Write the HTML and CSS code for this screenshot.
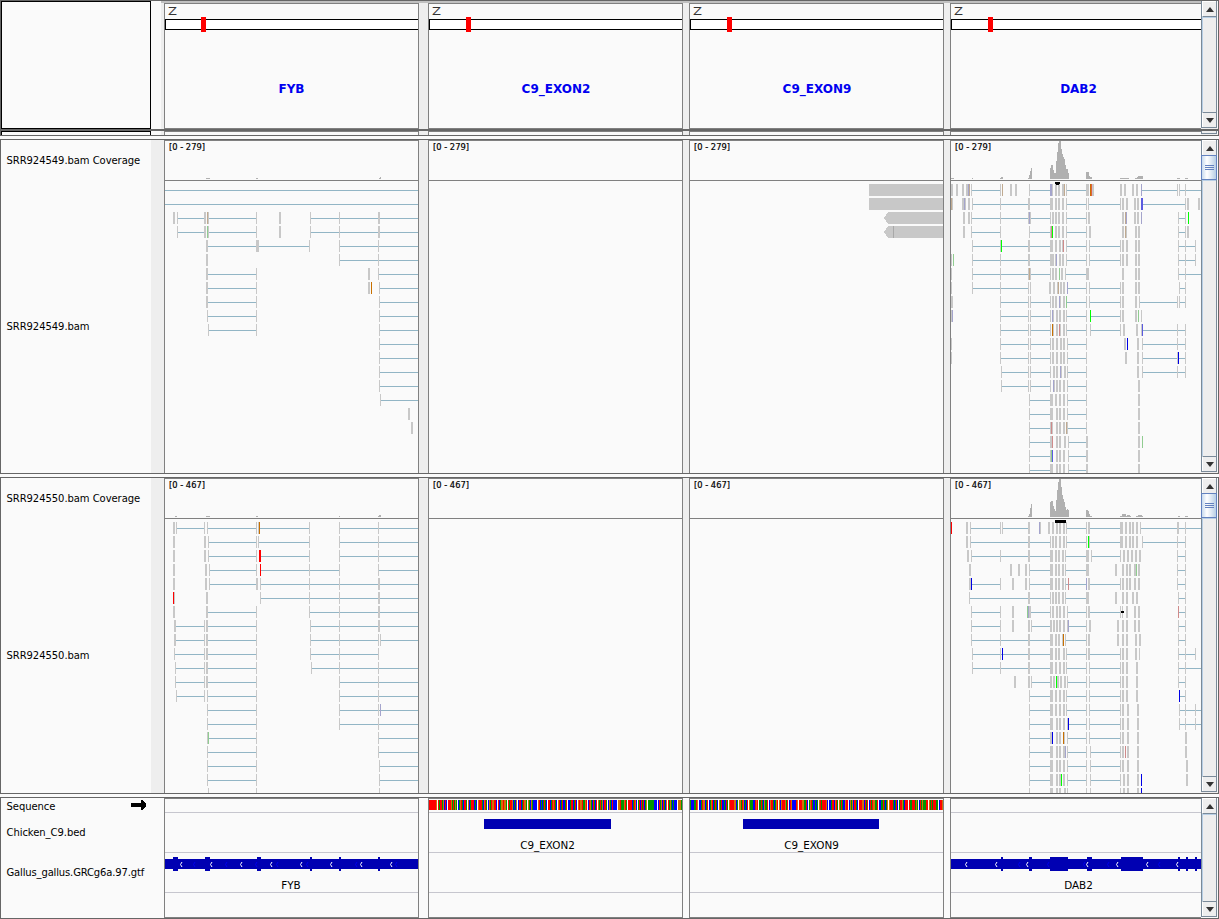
FILE: index.html
```html
<!DOCTYPE html>
<html lang="en">
<head>
<meta charset="utf-8">
<title>Genome viewer</title>
<link rel="stylesheet" href="styles.css">
</head>
<body>
<main class="app">
  <section class="row header-row">
    <div class="name-box"></div>
    <div class="gap gap-header"></div>
    <div class="topline"></div>
    <div class="frame f1"><svg data-view="header" data-x="165" data-y="4" data-w="253" data-h="124" data-mark="201" data-cx="291.5" data-label="FYB"></svg></div>
    <div class="frame f2"><svg data-view="header" data-x="429" data-y="4" data-w="253" data-h="124" data-mark="466" data-cx="556" data-label="C9_EXON2"></svg></div>
    <div class="frame f3"><svg data-view="header" data-x="690" data-y="4" data-w="253" data-h="124" data-mark="727" data-cx="817" data-label="C9_EXON9"></svg></div>
    <div class="frame f4"><svg data-view="header" data-x="951" data-y="4" data-w="250" data-h="124" data-mark="988" data-cx="1078.5" data-label="DAB2"></svg></div>
    <div class="scroll"><b class="up"></b><i></i><b class="down"></b></div>
  </section>
  <section class="row strip-row">
    <div class="name-box"></div>
    <div class="gap gap-header"></div>
    <div class="frame f1"></div><div class="frame f2"></div><div class="frame f3"></div><div class="frame f4"></div>
    <div class="scroll"></div>
  </section>
  <section class="row data-row row-549">
    <div class="names"><span class="cov">SRR924549.bam Coverage</span><span class="reads">SRR924549.bam</span></div>
    <div class="gap"></div>
    <div class="frame f1"><svg data-view="reads" data-set="fyb549" data-x="165" data-y="141" data-w="253" data-h="332" data-origin="160" data-range="[0 - 279]"></svg></div>
    <div class="frame f2"><svg data-view="reads" data-x="429" data-y="141" data-w="253" data-h="332" data-range="[0 - 279]"></svg></div>
    <div class="frame f3"><svg data-view="reads" data-set="exon9" data-x="690" data-y="141" data-w="253" data-h="332" data-range="[0 - 279]"></svg></div>
    <div class="frame f4"><svg data-view="reads" data-set="dab549" data-x="951" data-y="141" data-w="250" data-h="332" data-origin="945" data-range="[0 - 279]"></svg></div>
    <div class="scroll"><b class="up"></b><em></em><i></i><b class="down"></b></div>
  </section>
  <section class="row data-row row-550">
    <div class="names"><span class="cov">SRR924550.bam Coverage</span><span class="reads">SRR924550.bam</span></div>
    <div class="gap"></div>
    <div class="frame f1"><svg data-view="reads" data-set="fyb550" data-x="165" data-y="479" data-w="253" data-h="314" data-origin="160" data-range="[0 - 467]"></svg></div>
    <div class="frame f2"><svg data-view="reads" data-x="429" data-y="479" data-w="253" data-h="314" data-range="[0 - 467]"></svg></div>
    <div class="frame f3"><svg data-view="reads" data-x="690" data-y="479" data-w="253" data-h="314" data-range="[0 - 467]"></svg></div>
    <div class="frame f4"><svg data-view="reads" data-set="dab550" data-x="951" data-y="479" data-w="250" data-h="314" data-origin="945" data-range="[0 - 467]"></svg></div>
    <div class="scroll"><b class="up"></b><em></em><i></i><b class="down"></b></div>
  </section>
  <section class="row gene-row">
    <div class="names">
      <span class="seq">Sequence<svg class="arrow" width="15" height="10" viewBox="0 0 15 10" shape-rendering="crispEdges"><path d="M0 3h10V0h1l4 4v2l-4 4h-1V7H0z"/></svg></span>
      <span class="bed">Chicken_C9.bed</span>
      <span class="gtf">Gallus_gallus.GRCg6a.97.gtf</span>
    </div>
    <div class="frame f1"><svg data-view="genes" data-set="fyb" data-x="165" data-y="799" data-w="253" data-h="118"></svg></div>
    <div class="frame f2"><svg data-view="genes" data-set="exon2" data-x="429" data-y="799" data-w="253" data-h="118"></svg></div>
    <div class="frame f3"><svg data-view="genes" data-set="exon9" data-x="690" data-y="799" data-w="253" data-h="118"></svg></div>
    <div class="frame f4"><svg data-view="genes" data-set="dab2" data-x="951" data-y="799" data-w="250" data-h="118"></svg></div>
    <div class="scroll"><b class="up"></b><i></i><b class="down"></b></div>
  </section>
</main>
<script src="tracks.js"></script>
</body>
</html>
```

FILE: styles.css
```css
* { box-sizing: border-box; }
body { margin: 0; background: #fafafa; font-family: "DejaVu Sans", sans-serif; }
.app { width: 1219px; height: 919px; display: flex; flex-direction: column; overflow: hidden; }
.row {
  display: grid;
  grid-template-columns: 150px 10px 3px 255px 9px 255px 6px 255px 6px 251px 16px 1px;
  grid-template-rows: minmax(0, 1fr);
  border: 1px solid #666;
  background: #eee;
  flex: none;
}
.header-row { height: 130px; grid-template-rows: 2px minmax(0, 1fr); }
.strip-row { height: 6px; margin-bottom: 3px; }
.row-549 { height: 335px; margin-bottom: 3px; }
.row-550 { height: 317px; margin-bottom: 3px; }
.gene-row { height: 122px; background: #fafafa; }

.name-box { grid-column: 1; grid-row: 1 / -1; border: 1px solid #000; background: #fafafa; }
.strip-row .name-box { border-bottom: 0; }
.gap { grid-column: 2; grid-row: 1 / -1; }
.gap-header { background: #fafafa; }
.topline { grid-column: 3 / 11; grid-row: 1; background: #c0c0c0; }
.frame { grid-row: -2 / -1; border: 1px solid #808080; background: #fafafa; overflow: hidden; }
.f1 { grid-column: 4; }
.f2 { grid-column: 6; }
.f3 { grid-column: 8; }
.f4 { grid-column: 10; border-right: 0; }
.strip-row .frame, .data-row .frame { border-bottom: 0; }
.frame svg { display: block; }

.names {
  grid-column: 1;
  display: flex;
  flex-direction: column;
  background: #fafafa;
  font-size: 10px;
  letter-spacing: -0.06px;
  line-height: 14px;
  color: #000;
  white-space: nowrap;
}
.names span { display: flex; align-items: center; padding-left: 5.5px; }
.cov { height: 41px; }
.reads { flex: 1; }
.seq { height: 17px; }
.bed { height: 36px; }
.gtf { height: 43px; }
.gtf { letter-spacing: -0.15px; }
.names .seq { justify-content: space-between; padding-right: 5px; }
.arrow { margin-bottom: 3px; }

.scroll {
  grid-column: 11;
  grid-row: 1 / -1;
  display: flex;
  flex-direction: column;
  margin-bottom: 1px;
  background: #eee;
  border: 1px solid #7a8a99;
  border-top: 0;
  box-shadow: 1px 0 0 #fafafa;
}
.scroll b { height: 16px; flex: none; display: flex; align-items: center; justify-content: center; border-left: 1px solid #fff; border-top: 1px solid #fff; }
.scroll b::before { content: ""; border: 4.5px solid transparent; }
.scroll .up { border-bottom: 1px solid #7a8a99; }
.scroll .up::before { border-top: 0; border-bottom: 5px solid #333; }
.scroll .down { height: 15px; border-top: 1px solid #7a8a99; }
.scroll .down::before { border-bottom: 0; border-top: 5px solid #333; }
.scroll i { flex: 1; border-left: 1px solid #b8cfe5; border-top: 1px solid #b8cfe5; }
.scroll em {
  height: 25px;
  flex: none;
  margin: -1px -1px 0;
  border: 1px solid #6382bf;
  background:
    linear-gradient(#6382bf, #6382bf) 3px 9px / 9px 1px no-repeat,
    linear-gradient(#6382bf, #6382bf) 3px 11px / 9px 1px no-repeat,
    linear-gradient(#6382bf, #6382bf) 3px 13px / 9px 1px no-repeat,
    linear-gradient(90deg, #c8dbee, #fff 35%, #b8cfe5);
}

.label-chrom { font-size: 11px; fill: #333; }
.label-locus { font-size: 12px; font-weight: bold; fill: #0000f0; text-anchor: middle; }
.label-range { font-size: 8.3px; fill: #000; stroke: #000; stroke-width: .2px; }
.label-gene { font-size: 10.4px; fill: #000; text-anchor: middle; }
```

FILE: tracks.js
```js
const NS = 'http://www.w3.org/2000/svg';
const COLORS = {
  r: '#ff0000', R: '#cf8a8a', g: '#00ff00', n: '#90cc90', b: '#0000e6', v: '#a4a4cc',
  o: '#c87000', t: '#c0aa90', p: '#5b5be0', e: '#e06040'
};

// Rows are listed top to bottom. "a-b" is a splice junction, "a" a one pixel
// block, "axN" a block N pixels wide, a trailing letter its base colour.
// Positions are in thirds of a pixel from the track origin.
const READS = {
  fyb549: `15-774
15-774
52-134 147-288 452-774 39x2 51 132x2 141t 144 288 357x2 450 537 654x2
52-134 147-288 452-774 51 132x2 141n 144 288 357x2 450 537 654x2
144-447 540-774 138x2 288x3 447 537 654
540-774 138x2 537 654
144-288 657-774 138x2 288 624x2 654
144-288 660-774 138x2 288 624x2 633o 657
144-288 660-774 138x2 288 657
144-288 660-774 141 288 657
147-288 660-774 144 288 657
660-774 657
660-774 657
660-774 657
660-774 657
663-774 660
744x2
753x2`,
  dab549: `81-165 255-315 366-423 591-696 705-768 18x2 33x2 51x2 63x2 69v 72t 78 165 171t 195x2 210x2 252 315x2v 321 330x2 339x2 351x2 357t 363 423x3 435o 438e 441x2 525x2 537x2 561x2 573x2 588v 696 702 720
84-249 255-315 366-423 432-525 594-720 18t 21 51x2 57x2v 60 69x2 81 165 249x2 315x3 330x2 339x2 351x2 363 423 429 525 531x2 543x2 567x2 576x2 588x2p 720 726x2 759x2
81-315 366-423 702-720 54x2 69x2 78 165 249x2 252v 255 315 321x2 330x2 339x2 351x2 363 423 429x2 531x2 540t 543v 567x2 576x2 588v 699 720 729g
81-165 255-315 366-423 702-720 54x2 78 165 252 315x2 318R 321g 330x2 339x2 351x2 363 423 432x2 531x2 540t 543 570x2 579x2 699 720 726x2
84-315 366-423 435-525 702-750 81 165 168g 249x2 315x3 330x2 342x2 351 354R 363 423 432 525 531x2 543x2 570x2 579x2 699 720 750
84-315 366-423 435-525 702-750 18 24n 81 165 249x2 315x2 321x2 330 333v 342x2 351x2 363 423 432 525 531x2 543x2 570x2 579x2 699 720 750
84-315 363-423 702-768 18 81 165 249x3 252t 315 321x2 330x2 342n 348x2 360 423x3 531x2 570x2 579x2 699 720
84-249 369-423 435-525 705-720 18 81 165 249 255 312x2 324x2 336x2 339t 345x2 354x2 366v 423 432 525 531x2 570x2 579x2 702 720
168-249 258-315 366-423 435-525 585-696 705-720 18x2 165 249 255 315 321x2 330x2 342v 345 354x2 363n 423 432 525 531x2 570x2 582 696 702 720
168-249 258-315 366-423 438-525 18 21v 165 249 255 315 321v 324 333x2 342x2 354x2 363 423 435g 525 531x2 570x2 579n 588
168-249 258-315 366-423 438-525 594-720 165 249 255 315 321o 324 333x2 342R 345 354x2 363 423 435 525 534x2 573x2 588 591p 696 720
168-249 258-315 369-423 594-720 18 165 249 255 315 321x2 333x2 345x2 354x2 366 423 537x2 546b 576x2 591 696 720
168-249 258-315 369-423 594-720 18 165 249 255 315 321x2 333x2 345x2 354x2 366 423 540x2 576x2 591 696 699b 720
171-249 258-315 369-423 594-720 168 249 255 315 324x2 333x2 345v 348 357x2 366 423 576x2 591 696 720
171-249 258-315 369-423 168 249 255 315 324v 327 333x2 342x2 354x2 366 423 579x2
255-315 369-423 252 315x3 330x2 342x2 354x2 366 423 579x2
255-315 369-423 252 315x3 333x2 342x2 354x2 366 423 579x2
255-315 369-423 252 315x3 318R 333x2 342x2 354x2 363t 366 423 579x2
255-315 372-423 252 315x2 321R 333x2 342x2 357x2 369 423x2 579x2 591n
255-315 372-423 252 315 318n 321p 333x2 342x2 354x2 369 423x2 579x2
255-315 372-423 252 315x3 333x2 342x2 354x2 369 423x2 579x2`,
  fyb550: `51-132 144-288 300-447 540-774 39x2 48 132 141 288 294 297o 447 537 654
147-288 297-447 540-774 39x2 132x2 144 288 294 447 537 654
147-288 303-447 540-774 39x2 132x2 144 288 297x2r 447 537 654
150-288 303-537 657-774 39x2 135x2 147 288 300r 447 537 654
150-288 303-774 39x2 135x2 147 288x2 300 447 537 654x2
303-774 39r 42 138x2 300 447 537 654x2
144-288 450-774 39x2 138x2 288 447 537 654x2
48-132 144-288 453-774 42x2 132 138x2 288 450 537 654x2
48-132 144-288 453-654 663-774 42x2 132 138x2 288 450 537 654 660
45-132 144-288 453-654 42 132 138x2 288 450 537 654
48-132 144-288 456-774 45 132 138x2 288 453 537 654
48-132 144-288 540-774 45 132 138x2 288 537 654
51-132 144-288 540-774 48 132 141 288 537 654
144-288 540-774 141 288 537 654 660v
144-288 540-774 141 288 537 654
147-288 657-774 141 144n 288 654
144-288 657-774 141 288 654
144-288 660-774 141 288 657
144-288 660-774 141 288 657
144 288 657`,
  dab550: `78-165 174-249 366-423 435-525 588-768 18r 63x2 75 165 171 249x2 282v 285 309x2 321x2 333x2 342x2 354x2 363 423 429x2 525x3 540x2 552x2 561x2 573x2 585 696x2 720
78-315 366-423 435-525 594-720 63x2 75 249x2 315 321x2 330x2 342x2 354x2 363 423 429g 432 525x3 540x2 552x2 561x2 573x2 591 696 720
81-315 363-423 441-525 699-720 66x2 78 165 249x2 315x3 330x2 339x2 351x2 360 423x3 438 525 534x2 546x2 558x2 570x2 582x2 696 720
255-315 363-423 699-720 72x2 195x2 219x2 240x2 252 315x3 330x2 339x2 351x2 360 423x3 510x2 531x2 543x2 552x2 567x2 573n 579x2 696 720
81-165 255-315 363-423 435-525 699-720 72x2 78b 165 201x2 240x2 252 315x3 330x2 339x2 351x2 360 369R 423v 429x2 525 531x2 543x2 552x2 567x2 579x2 696 720
75-315 363-423 702-720 72 249x2 315 321x2 330x2 339x2 351x2 360 423x3 510x2 531x2 543x2 561x2 573x2 699 720
81-165 258-315 369-423 435-525 702-720 78 165 201x2 246n 249v 252x2 315 321x2 333x2 342x2 354x2 366 423 429x2 525 531 543x2 567x2 579x2 699R 720
81-165 261-315 372-423 702-720 78 165 201x2 249x2 258 315x2 324x2 333x2 342x2 354x2 366 369v 423 432x2 516x2 531x2 543x2 567x2 579x2 699 720
81-315 363-423 702-720 78 165 249x2 315x3 330x2 339x2 351 354o 360 423 429x2 516x2 531x2 543x2 570x2 582x2 699 720
84-315 366-423 435-525 702-750 81 165 171b 249x2 315x3 330x2 339x2 354x2 363 423 429x2 525 531x2 543x2 570x2 582 699 720 750
84-315 366-423 435-525 702-768 81 165 249x2 315x3 330x2 342x2 354x2 363 423 432 525 531x2 543x2 573x2 699 720
261-315 369-423 435-525 702-720 207x2 249x2 258 315x2 324x2 333g 336x2 345x2 357x2 366 423 432 525 531x2 543x2 573x2 699 720
255-315 366-423 435-525 705-720 252 315x3 330x2 342x2 354x2 363 423 432 525 531x2 543x2 573x2 702b 720
255-315 366-423 435-525 705-768 252 315x3 330x2 342x2 354x2 363 423 432 525 531x2 546x2 576x2 702 720 750
255-315 372-423 435-525 705-768 252 315x3 333x2 342x2 354x2 366 369b 423 432 525 531x2 546x2 576x2 702 720 750
255-315 369-423 435-525 252 315x2 321b 333x2 342x2 354o 357 366 423 432 525 531x2 546x2 576x2 720x2
255-315 369-423 438-525 252 315x3 333x2 342x2 354x2 360v 366 423 435 525 531x2 540R 546x2 576x2 720x2
255-315 369-423 438-525 252 315x3 333x2 342x2 354x2 366 423 435 525 531x2 546x2 576x2 723x2
255-315 369-423 438-525 252 315x3 333x2 342x2 348g 354x2 366 423 435 525 534x2 546x2 576x2 588b 723x2
252 315x3 333x2 342x2 357x2 366 423 435 525 534x2 546x2 576x2 588b`
};

// Coverage columns: position, width in pixels, height in pixels.
const COVERAGE = {
  fyb549: '138,4,1 288,2,1 657,1,1 660,1,2',
  dab549: '18,3,1 81,1,1 165,1,1 168,2,2 249,1,1 252,1,4 255,1,8 258,1,11 315,1,11 318,2,14 324,1,9 327,2,6 333,1,18 336,1,27 339,1,36 342,2,38 348,1,30 351,1,25 354,1,22 357,1,20 360,1,14 363,2,10 369,1,6 423,3,7 432,1,3 435,2,2 525,9,1 570,2,1 576,1,2 579,5,3 696,3,1 720,3,1',
  fyb550: '45,2,1 138,4,1 288,2,1 537,1,1 654,1,1 657,2,2',
  dab550: '249,1,1 252,1,3 255,1,9 258,1,13 315,1,15 318,2,16 324,1,11 327,1,8 330,1,6 333,1,17 336,1,27 339,1,35 342,2,38 348,1,30 351,1,22 354,1,18 357,1,15 360,1,10 363,1,7 366,1,8 369,1,7 423,2,7 429,1,6 432,1,3 435,2,1 525,2,1 531,4,3 543,1,1 546,3,2 555,1,1 573,2,1 579,4,2 591,1,1 699,2,1 720,3,1'
};

const GENES = {
  fyb: {
    label: 'FYB', cx: 291, ly: 889,
    exons: [[173, 5], [205, 5], [257, 4], [310, 2], [339, 2], [378, 2]],
    dim: [193, 225, 255, 276, 306, 355, 395], chevrons: [180, 210, 240, 270, 300, 330, 360, 390]
  },
  dab2: {
    label: 'DAB2', cx: 1078.5, ly: 889,
    exons: [[1001, 2], [1029, 3], [1050, 18], [1087, 5], [1121, 22], [1178, 2], [1186, 2], [1195, 2]],
    dim: [1018, 1047, 1083, 1107, 1158], chevrons: [965, 995, 1026, 1086, 1116, 1146, 1176]
  },
  exon2: {
    label: 'C9_EXON2', cx: 547.5, ly: 849, bed: [484, 127],
    seq: 'TTTTTTTG TATTAGCTC TTTGATAGA CAGTACTTA GCATTTCAC GTTTACGTA CGATGGTTC TCAGGTGGA TATTGCACG CTTCATGGA GACGACCCC GTCACATAC TTCATGTAC GTCATCCAT CCATTCATC GTGGTAAGT CTGACTACT GATAGCTTA CGACTCCCC GGTAAAGTA TTTTCATGC ATCTATCAG AAAAAACCC CTAGCTACG TAGACACCC GGGAATGGA CTTAAATAT CATGGAATC GTTTTG'
  },
  exon9: {
    label: 'C9_EXON9', cx: 811.5, ly: 849, bed: [743, 136],
    seq: 'ACCCAATG CCATGGCAT CAGTCATAC GATCCACTA GTTTTGGCA GGATGCACT GAAACCTGT AATACGAAT CGTTACAGT GCGTTTGAT CTGCCCCTG TTTGGAATC AGTACCACA GTATTTTGC CCATTCGTA GATACCGTT CGAGCTTAC TTTGGCTAT CTATGGAAT CCAATACAG GTTTACATC ATTGACTTT TAATTTAGA CTAGAAATT GATATTTAA CTTGACTTG CTTGGACAT CCTTTTAGC TTTTGA'
  }
};
const BASES = { A: '#009600', C: '#0000ff', G: '#d17105', T: '#ff0000', ' ': '#ffffff' };

function add(svg, tag, attrs, text) {
  const node = document.createElementNS(NS, tag);
  for (const key in attrs) node.setAttribute(key, attrs[key]);
  if (text) node.textContent = text;
  svg.appendChild(node);
}
function rect(svg, x, y, width, height, fill) {
  add(svg, 'rect', { x, y, width, height, fill });
}

function drawHeader(svg, d, x, y, w) {
  rect(svg, x, 19, w, 11, '#000');
  rect(svg, x + 1, 20, w, 9, '#fff');
  rect(svg, +d.mark, 17, 5, 15, '#f00');
  add(svg, 'text', { x: x + 3, y: 15, class: 'label-chrom', textLength: 9, lengthAdjust: 'spacingAndGlyphs' }, 'Z');
  add(svg, 'text', { x: d.cx, y: 93, class: 'label-locus' }, d.label);
}

function drawReads(svg, d, x, y, w) {
  const base = y + 38;
  const origin = +d.origin;
  const at = u => origin + Math.floor(u / 3);
  rect(svg, x, base + 1, w, 1, '#808080');
  (COVERAGE[d.set] || '').split(' ').filter(Boolean).forEach(bar => {
    const [u, bw, h] = bar.split(',').map(Number);
    rect(svg, at(u), base - h, bw, h, '#b0b0b0');
  });
  (READS[d.set] || '').split('\n').filter(Boolean).forEach((line, row) => {
    const top = base + 5 + row * 14;
    line.split(' ').forEach(token => {
      if (token.includes('-')) {
        const [a, b] = token.split('-').map(Number);
        rect(svg, at(a), top + 6, at(b) - at(a), 1, '#92b5c5');
        return;
      }
      const [, u, bw, c] = token.match(/^(\d+)(?:x(\d+))?([a-zA-Z])?$/);
      rect(svg, at(+u), top, +(bw || 1), 12, COLORS[c] || '#c8c8c8');
    });
  });
  if (d.set === 'exon9') {
    rect(svg, 869, 184, 74, 12, '#c8c8c8');
    rect(svg, 869, 198, 74, 12, '#c8c8c8');
    add(svg, 'path', { d: 'M943 212H888L884 218L888 224H943zM943 226H888L884 232L888 238H943z', fill: '#c8c8c8' });
    rect(svg, 893, 226, 1, 12, '#a8a8a8');
  }
  if (d.set === 'dab549') {
    rect(svg, 1055, 182, 5, 2, '#000');
    rect(svg, 1056, 184, 3, 1, '#000');
  }
  if (d.set === 'dab550') {
    rect(svg, 1055, 520, 11, 3, '#000');
    rect(svg, 1121, 611, 3, 2, '#000');
  }
  add(svg, 'text', { x: x + 4, y: y + 9, class: 'label-range', textLength: 36 }, d.range);
}

function drawGenes(svg, d, x, y, w) {
  const g = GENES[d.set];
  [812, 852, 892].forEach(ly => rect(svg, x, ly, w, 1, '#c6c6ce'));
  if (g.seq) {
    [...g.seq].slice(0, w).forEach((base, i) => rect(svg, x + i, 800, 1, 10, BASES[base]));
    rect(svg, g.bed[0], 819, g.bed[1], 10, '#0000b2');
  } else {
    rect(svg, x, 859, w, 10, '#0000b2');
    g.exons.forEach(([ex, ew]) => rect(svg, ex, 857, ew, 14, '#0000b2'));
    const chevron = (cx, stroke) => add(svg, 'path', {
      d: `M${cx + 2} 862L${cx + 0.5} 864.5L${cx + 2} 867`, fill: 'none', stroke, 'shape-rendering': 'auto'
    });
    g.dim.forEach(cx => chevron(cx, '#0000ee'));
    g.chevrons.forEach(cx => chevron(cx, '#fff'));
  }
  add(svg, 'text', { x: g.cx, y: g.ly, class: 'label-gene' }, g.label);
}

const VIEWS = { header: drawHeader, reads: drawReads, genes: drawGenes };
document.querySelectorAll('svg[data-view]').forEach(svg => {
  const d = svg.dataset;
  svg.setAttribute('width', d.w);
  svg.setAttribute('height', d.h);
  svg.setAttribute('viewBox', `${d.x} ${d.y} ${d.w} ${d.h}`);
  svg.setAttribute('shape-rendering', 'crispEdges');
  VIEWS[d.view](svg, d, +d.x, +d.y, +d.w);
});
```
